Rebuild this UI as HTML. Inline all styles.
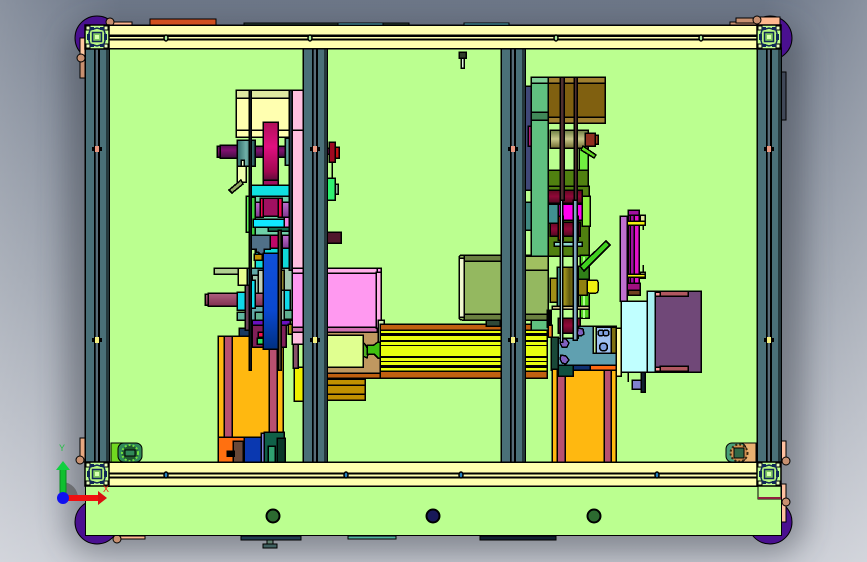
<!DOCTYPE html>
<html><head><meta charset="utf-8"><style>
html,body{margin:0;padding:0;width:867px;height:562px;overflow:hidden;background:#a0a6b0}
svg{display:block}
text{font-family:"Liberation Sans",sans-serif}
</style></head><body>
<svg width="867" height="562" viewBox="0 0 867 562" xmlns="http://www.w3.org/2000/svg">
<defs>
<linearGradient id="bg" x1="0" y1="0" x2="0" y2="1"><stop offset="0" stop-color="#6d7788"/><stop offset=".5" stop-color="#989fab"/><stop offset="1" stop-color="#c8cbd3"/></linearGradient>
<linearGradient id="bgh" x1="0" y1="0" x2="1" y2="0"><stop offset="0" stop-color="#fff" stop-opacity=".2"/><stop offset=".14" stop-color="#fff" stop-opacity="0"/><stop offset=".88" stop-color="#fff" stop-opacity="0"/><stop offset="1" stop-color="#fff" stop-opacity=".2"/></linearGradient>
<filter id="sh" x="-20%" y="-20%" width="140%" height="140%"><feGaussianBlur stdDeviation="15"/></filter>
<linearGradient id="mag" x1="0" y1="0" x2="0" y2="1"><stop offset="0" stop-color="#b01058"/><stop offset=".4" stop-color="#e01080"/><stop offset=".8" stop-color="#a00850"/><stop offset="1" stop-color="#401030"/></linearGradient>
<linearGradient id="blue" x1="0" y1="0" x2="0" y2="1"><stop offset="0" stop-color="#1050d8"/><stop offset=".6" stop-color="#0a48d0"/><stop offset="1" stop-color="#003080"/></linearGradient>
<linearGradient id="shaft" x1="0" y1="0" x2="0" y2="1"><stop offset="0" stop-color="#501050"/><stop offset=".4" stop-color="#801070"/><stop offset="1" stop-color="#401040"/></linearGradient>
<linearGradient id="shaft2" x1="0" y1="0" x2="0" y2="1"><stop offset="0" stop-color="#b06080"/><stop offset="1" stop-color="#803050"/></linearGradient>
<linearGradient id="teal" x1="0" y1="0" x2="1" y2="0"><stop offset="0" stop-color="#2f6a68"/><stop offset=".5" stop-color="#70b0a8"/><stop offset="1" stop-color="#205050"/></linearGradient>
<linearGradient id="red" x1="0" y1="0" x2="0" y2="1"><stop offset="0" stop-color="#600820"/><stop offset=".5" stop-color="#900838"/><stop offset="1" stop-color="#500820"/></linearGradient>
<linearGradient id="oli" x1="0" y1="0" x2="0" y2="1"><stop offset="0" stop-color="#6a7a40"/><stop offset=".5" stop-color="#c8c88a"/><stop offset="1" stop-color="#706a30"/></linearGradient>
<linearGradient id="pul" x1="0" y1="0" x2="1" y2="0"><stop offset="0" stop-color="#706a10"/><stop offset=".3" stop-color="#b0a020"/><stop offset=".6" stop-color="#605a10"/><stop offset="1" stop-color="#a09018"/></linearGradient>
<linearGradient id="lil" x1="0" y1="0" x2="0" y2="1"><stop offset="0" stop-color="#c070d0"/><stop offset="1" stop-color="#803890"/></linearGradient>
<g id="corner">
<rect x="0" y="0" width="24" height="24" fill="#c0ff90" stroke="#000" stroke-width="1.500"/>
<rect x="1" y="1" width="4" height="4" fill="#e8ffc0" stroke="#000"/><rect x="19" y="1" width="4" height="4" fill="#e8ffc0" stroke="#000"/>
<rect x="1" y="19" width="4" height="4" fill="#e8ffc0" stroke="#000"/><rect x="19" y="19" width="4" height="4" fill="#e8ffc0" stroke="#000"/>
<path d="M5 5 L12 3 L19 5 L21 12 L19 19 L12 21 L5 19 L3 12Z" fill="#b8f880" stroke="#102858" stroke-width="1.500"/>
<rect x="7.500" y="7.500" width="9" height="9" fill="#80c860" stroke="#102858" stroke-width="1.500"/>
<rect x="10" y="10" width="4" height="4" fill="#d8ffb0"/>
<rect x="5" y="2" width="4" height="3" fill="#102858"/><rect x="15" y="2" width="4" height="3" fill="#102858"/><rect x="5" y="19" width="4" height="3" fill="#102858"/><rect x="15" y="19" width="4" height="3" fill="#102858"/>
<rect x="2" y="9" width="3" height="6" fill="#102858"/><rect x="19" y="9" width="3" height="6" fill="#102858"/>
</g>
<g id="col">
<rect x="0" y="0" width="24" height="414" fill="#4a7078" stroke="#000" stroke-width="1.500"/>
<rect x="9" y="0" width="6" height="414" fill="#304850"/>
<rect x="9" y="0" width="1.500" height="414" fill="#000"/><rect x="11.500" y="0" width="1" height="414" fill="#8090a0"/><rect x="13" y="0" width="2" height="414" fill="#000"/>
<rect x="21.500" y="0" width="1" height="414" fill="#000"/>
<rect x="7" y="99" width="10" height="4" fill="#000"/><rect x="10" y="98" width="4" height="6" fill="#e89880"/>
<rect x="7" y="290" width="10" height="4" fill="#000"/><rect x="10" y="289" width="4" height="6" fill="#f4f080"/>
</g>
</defs>

<rect width="867" height="562" fill="url(#bg)"/>
<rect width="867" height="562" fill="url(#bgh)"/>
<rect x="66" y="24" width="738" height="530" rx="30" fill="#3a3f48" opacity=".45" filter="url(#sh)"/>

<!-- behind parts -->
<g stroke="#000" shape-rendering="crispEdges">
<rect x="150" y="19" width="66" height="7" fill="#d05020"/>
<rect x="244" y="23" width="94" height="3" fill="#304838"/>
<rect x="338" y="23" width="45" height="3" fill="#60c0d0"/>
<rect x="383" y="23" width="26" height="3" fill="#304838"/>
<rect x="464" y="23" width="45" height="3" fill="#60c0d0"/>
<rect x="241" y="536" width="60" height="4" fill="#203c50"/>
<rect x="348" y="536" width="48" height="3" fill="#50b0a0"/>
<rect x="480" y="536" width="76" height="4" fill="#102030"/>
<rect x="267" y="540" width="6" height="4" fill="#608070"/>
<rect x="263" y="544" width="14" height="4" fill="#406060"/>
<rect x="781" y="72" width="5" height="48" fill="#404858"/>
<rect x="237" y="486" width="21" height="5" fill="#a0a070"/>
<rect x="280" y="486" width="22" height="5" fill="#a0a070"/>
</g>
<!-- wheels -->
<g fill="#4a1090" stroke="#000">
<circle cx="97" cy="38" r="22"/><circle cx="770" cy="38" r="22"/>
<circle cx="97" cy="522" r="22"/><circle cx="770" cy="522" r="22"/>
</g>
<!-- tan brackets -->
<g stroke="#000" fill="#e8a880" shape-rendering="crispEdges">
<rect x="80" y="38" width="5" height="20" fill="#ffc8a0"/>
<rect x="80" y="60" width="5" height="18" fill="#c89070"/>
<rect x="80" y="438" width="5" height="24"/>
<rect x="781" y="441" width="5" height="20" fill="#ffc0a0"/><rect x="781" y="484" width="5" height="38" fill="#ffc0a0"/>
<rect x="730" y="22" width="28" height="4" fill="#c89070"/>
<rect x="736" y="18" width="22" height="5" fill="#c89070"/>
<rect x="758" y="17" width="22" height="8" fill="#ffb890"/>
<rect x="115" y="536" width="30" height="3" fill="#ffb890"/>
<rect x="110" y="22" width="22" height="3" fill="#ffb890"/>
</g>
<g fill="#c89070" stroke="#000"><circle cx="110" cy="22" r="4"/><circle cx="81" cy="58" r="4"/><circle cx="80" cy="460" r="4"/><circle cx="786" cy="461" r="4"/><circle cx="786" cy="502" r="4"/><circle cx="757" cy="20" r="4"/><circle cx="117" cy="539" r="4"/></g>

<!-- main green plate -->
<g shape-rendering="crispEdges" stroke="#000">
<rect x="85.500" y="486" width="696" height="49.500" fill="#bbff90"/>
<rect x="108" y="48" width="650" height="415" fill="#bbff90"/>
</g>

<!-- left assembly -->
<g stroke="#000" stroke-width="1.500" shape-rendering="crispEdges">
<rect x="292" y="90" width="11" height="254" fill="#ffc0e0"/>
<line x1="292" y1="130" x2="303" y2="130"/>
<!-- pink motor -->
<rect x="292" y="268" width="89" height="64" fill="#ff99f0"/>
<rect x="292" y="268" width="85" height="5" fill="#ffb0e8"/>
<rect x="292" y="327" width="85" height="5" fill="#d070b0"/>
<rect x="376" y="272" width="5" height="56" fill="#ffb0e8"/>
<!-- yellow box -->
<rect x="236" y="90" width="56" height="47" fill="#ffffb0"/>
<rect x="236" y="90" width="56" height="8" fill="#e0e8a0"/>
<line x1="236" y1="130" x2="292" y2="130"/>
<!-- shaft -->
<rect x="217" y="146" width="75" height="11" fill="url(#shaft)"/>
<rect x="220" y="145" width="18" height="13" fill="url(#shaft)"/>
<rect x="237" y="140" width="18" height="26" fill="url(#teal)"/>
<rect x="285" y="138" width="7" height="27" fill="url(#teal)"/>
<rect x="263" y="122" width="15" height="62" fill="url(#mag)"/>
<!-- right of column -->
<rect x="327" y="148" width="6" height="6" fill="#801060"/>
<rect x="329" y="142" width="6" height="20" fill="#a00820"/>
<rect x="335" y="147" width="4" height="11" fill="#c01010"/>
<line x1="332" y1="162" x2="332" y2="178"/>
<rect x="326" y="178" width="9" height="22" fill="#30f070"/>
<rect x="335" y="184" width="3" height="10" fill="#90c0a0"/>
<rect x="327" y="232" width="14" height="11" fill="#50182c"/>
<!-- hanger -->
<rect x="241" y="160" width="3" height="7" fill="#f0ffd0"/>
<rect x="237" y="166" width="9" height="16" fill="#f0ffb0"/>
<path d="M229 190 L241 180 L243 184 L232 193Z" fill="#90a860"/>
<!-- stack -->
<rect x="246" y="196" width="9" height="36" fill="#60f050"/>
<rect x="250" y="197" width="5" height="38" fill="#40d040"/>
<rect x="255" y="196" width="37" height="72" fill="#70d0a8"/>
<rect x="251" y="185" width="38" height="11" fill="#10e0e0"/>
<rect x="263" y="180" width="15" height="5" fill="#a01060"/>
<rect x="255" y="202" width="5" height="15" fill="url(#lil)"/>
<rect x="260" y="198" width="3" height="19" fill="#f00850"/>
<rect x="263" y="198" width="15" height="18" fill="#a01060"/>
<rect x="278" y="198" width="4" height="19" fill="#f00850"/>
<rect x="282" y="202" width="8" height="15" fill="url(#lil)"/>
<rect x="253" y="219" width="31" height="8" fill="#10e8ff"/>
<rect x="284" y="217" width="8" height="11" fill="#f080e0"/>
<rect x="268" y="227" width="23" height="4" fill="#107050"/>
<rect x="282" y="235" width="8" height="13" fill="url(#lil)"/>
<rect x="263" y="235" width="15" height="18" fill="#c00868"/>
<rect x="255" y="248" width="37" height="20" fill="#10d8d8"/>
<path d="M251 235 H270 V249 H264 V258 L258 252 H256 V249 H251Z" fill="#507088"/>
<rect x="254" y="254" width="8" height="6" fill="#c09000"/>
<rect x="282" y="248" width="10" height="20" fill="#10d8d8"/>
<!-- lower -->
<rect x="214" y="268" width="31" height="6" fill="#b0d090"/>
<rect x="245" y="268" width="18" height="52" fill="#60a8a8"/>
<rect x="252" y="275" width="6" height="20" fill="#a0c8b0"/>
<rect x="258" y="270" width="5" height="25" fill="#c0d0b8"/>
<rect x="278" y="268" width="14" height="52" fill="#a0c8b0"/>
<rect x="281" y="270" width="3" height="20" fill="#908830"/>
<rect x="205" y="294" width="6" height="11" fill="url(#shaft2)"/>
<rect x="208" y="293" width="55" height="13" fill="url(#shaft2)"/>
<rect x="238" y="268" width="9" height="17" fill="#e8ff90"/>
<rect x="237" y="292" width="8" height="18" fill="#10d8e8"/>
<rect x="250" y="280" width="5" height="28" fill="#10e0f0"/>
<rect x="284" y="290" width="6" height="20" fill="#10d8e8"/>
<rect x="284" y="310" width="8" height="9" fill="#60b090"/>
<rect x="255" y="312" width="8" height="8" fill="#60b090"/>
<rect x="237" y="312" width="8" height="8" fill="#60b8a0"/>
<rect x="252" y="320" width="38" height="5" fill="#6a10c0"/>
<rect x="239" y="328" width="11" height="8" fill="#183860"/>
<!-- orange box -->
<rect x="218" y="336" width="65" height="101" fill="#ffb810"/>
<rect x="224" y="336" width="8" height="101" fill="#b85070"/>
<rect x="269" y="345" width="8" height="92" fill="#b85070"/>
<rect x="218" y="437" width="27" height="25" fill="#ff7010"/>
<rect x="233" y="441" width="10" height="21" fill="#684838"/>
<rect x="227" y="451" width="7" height="5" fill="#000"/>
<rect x="244" y="437" width="18" height="25" fill="#0a38b0"/>
<rect x="261" y="433" width="4" height="29" fill="#8080d8"/>
<rect x="264" y="432" width="20" height="30" fill="#106048"/>
<rect x="268" y="446" width="7" height="16" fill="#30a070"/>
<rect x="277" y="438" width="8" height="24" fill="#083828"/>
<!-- disc & belts -->
<rect x="252" y="325" width="11" height="22" fill="#802058"/>
<rect x="258" y="332" width="5" height="5" fill="#f01050"/>
<rect x="257" y="338" width="6" height="6" fill="#30e060"/>
<rect x="278" y="325" width="8" height="22" fill="#802058"/>
<rect x="288" y="324" width="4" height="10" fill="#a09010"/>
<rect x="263" y="253" width="15" height="96" fill="url(#blue)"/>
<rect x="249" y="90" width="2" height="280" fill="#182838"/>
<rect x="278" y="230" width="3" height="140" fill="#584830"/>
<rect x="245" y="285" width="4" height="45" fill="#684058"/>
<rect x="289" y="90" width="3" height="180" fill="#283848"/>
<!-- yellow & low -->
<rect x="294" y="367" width="9" height="34" fill="#f0f000"/>
<rect x="293" y="344" width="5" height="24" fill="#885068"/>
<!-- right of left col -->
<rect x="327" y="332" width="58" height="41" fill="#c09860"/>
<rect x="327" y="335" width="36" height="32" fill="#e0ff90"/>
<path d="M363 342 Q370 349 367 358 L363 356Z" fill="#50b020"/>
<path d="M367 345 H374 L378 342 H385 V358 H378 L374 354 H367Z" fill="#40c010"/>
<rect x="378" y="320" width="6" height="22" fill="#d0f0b0"/>
<rect x="327" y="373" width="73" height="5" fill="#c06010"/>
<rect x="327" y="379" width="38" height="21" fill="#c09000"/>
<line x1="327" y1="385" x2="365" y2="385"/><line x1="327" y1="394" x2="365" y2="394"/>
<!-- long yellow slide -->
<rect x="380" y="324" width="167" height="6" fill="#c06010"/>
<rect x="380" y="330" width="167" height="41" fill="#e8ff10"/>
<rect x="380" y="371" width="167" height="7" fill="#c06010"/>
<g fill="#000" stroke="none"><rect x="381" y="333" width="166" height="3"/><rect x="381" y="340" width="166" height="2"/><rect x="381" y="345" width="166" height="1"/><rect x="381" y="356" width="166" height="2"/><rect x="381" y="361" width="166" height="1"/><rect x="381" y="365" width="166" height="3"/></g>
<!-- olive motor -->
<rect x="459" y="255" width="89" height="65" rx="3" fill="#94b860"/>
<rect x="459" y="258" width="5" height="59" fill="#f0f8d0"/>
<rect x="464" y="255" width="84" height="6" fill="#6a8040"/>
<rect x="464" y="314" width="84" height="6" fill="#6a8040"/>
<rect x="486" y="320" width="14" height="6" fill="#304838"/>
<rect x="459" y="52" width="7" height="6" fill="#303c28"/>
<rect x="461" y="58" width="3" height="10" fill="#e0f8e0"/>
</g>

<!-- right assembly -->
<g stroke="#000" stroke-width="1.500" shape-rendering="crispEdges">
<rect x="525" y="86" width="6" height="104" fill="#404878"/>
<rect x="548" y="77" width="57" height="46" fill="#806010"/>
<rect x="548" y="77" width="57" height="6" fill="#a08030"/>
<rect x="548" y="117" width="57" height="6" fill="#a08030"/>
<rect x="550" y="130" width="38" height="18" fill="url(#oli)"/>
<rect x="585" y="133" width="10" height="13" fill="#903020"/>
<rect x="595" y="135" width="3" height="9" fill="#a04020"/>
<rect x="528" y="126" width="4" height="20" fill="#b02070"/>
<rect x="579" y="148" width="9" height="24" fill="#70f040"/>
<rect x="548" y="170" width="40" height="16" fill="#508010"/>
<rect x="548" y="186" width="41" height="70" fill="#508010"/>
<rect x="582" y="196" width="8" height="30" fill="#90f040"/>
<rect x="548" y="190" width="34" height="13" fill="url(#red)"/>
<rect x="550" y="222" width="30" height="14" fill="url(#red)"/>
<rect x="548" y="204" width="10" height="19" fill="#409090"/>
<rect x="558" y="204" width="24" height="16" fill="#ff00f0"/>
<rect x="558" y="216" width="5" height="24" fill="#f04010"/>
<rect x="574" y="216" width="4" height="24" fill="#f04010"/>
<rect x="554" y="242" width="28" height="4" fill="#90d8d0"/>
<rect x="525" y="202" width="6" height="28" fill="#408880"/>
<rect x="531" y="77" width="17" height="179" fill="#60c080"/>
<rect x="531" y="77" width="17" height="6" fill="#80d098"/>
<rect x="531" y="112" width="17" height="8" fill="#408858"/>
<rect x="525" y="256" width="23" height="14" fill="#a0c060"/>
<rect x="580" y="255" width="9" height="63" fill="#50d020"/>
<rect x="583" y="257" width="2" height="61" fill="#b0ff90" stroke="none"/>
<rect x="550" y="278" width="7" height="24" fill="#a09018"/>
<rect x="557" y="267" width="21" height="41" fill="url(#pul)"/>
<rect x="557" y="267" width="4" height="41" fill="#408888"/>
<rect x="578" y="273" width="9" height="22" fill="#908010"/>
<rect x="587" y="280" width="11" height="13" rx="2" fill="#f0f010"/>
<rect x="552" y="306" width="37" height="3" fill="#d8c890"/>
<rect x="531" y="320" width="20" height="10" fill="#60c080"/>
<rect x="578" y="266" width="11" height="13" fill="#308018"/>
<path d="M580 266 L606 241 L610 245 L584 271Z" fill="#40d020"/>
<path d="M583 146 L596 155 L594 158 L581 150Z" fill="#60d820"/>
<rect x="558" y="318" width="22" height="15" fill="url(#red)"/>
<rect x="547" y="310" width="4" height="17" fill="#000"/>
<rect x="548" y="325" width="4" height="12" fill="#f08020"/>
<rect x="551" y="337" width="7" height="33" fill="#184838"/>
<rect x="560" y="77" width="4" height="123" fill="#503030"/>
<rect x="574" y="77" width="3" height="123" fill="#503030"/>
<!-- right lower -->
<rect x="552" y="369" width="64" height="93" fill="#ffb810"/>
<rect x="557" y="369" width="8" height="93" fill="#b85070"/>
<rect x="604" y="369" width="7" height="93" fill="#b85070"/>
<rect x="558" y="365" width="58" height="5" fill="#ff6a10"/>
<rect x="573" y="365" width="17" height="5" fill="#103070"/>
<rect x="558" y="365" width="15" height="11" fill="#105040"/>
<rect x="593" y="326" width="23" height="30" fill="#c0e898"/>
<path d="M558 338 H578 V326 H593 V353 H616 V365 H558Z" fill="#60a0b0"/>
<rect x="596" y="327" width="15" height="26" fill="#a0c0f0"/>
<circle cx="601" cy="333" r="3" fill="#80a0e0"/><circle cx="606" cy="333" r="3" fill="#80a0e0"/><circle cx="603.500" cy="347" r="4" fill="#80a0e0"/>
<rect x="611" y="327" width="5" height="26" fill="#807010"/>
<g fill="#8060c0"><polygon points="561,338 566,339 569,343 567,347 562,347 560,343"/><polygon points="561,355 566,356 569,360 566,364 562,363 560,359"/><polygon points="578,328 583,329 584,334 581,336 577,335"/></g>
<rect x="560" y="200" width="2.500" height="142" fill="#a0c8d0"/>
<rect x="573" y="200" width="4" height="140" fill="#80a8c0"/>
<rect x="616" y="328" width="5" height="48" fill="#ffffa0"/>
<rect x="621" y="301" width="26" height="71" fill="#c0ffff"/>
<rect x="647" y="291" width="8" height="81" fill="#a8f0f0"/>
<rect x="655" y="291" width="46" height="81" fill="#704878"/>
<rect x="660" y="291" width="28" height="5" fill="#b05860"/>
<rect x="660" y="366" width="28" height="5" fill="#b05860"/>
<rect x="655" y="292" width="5" height="4" fill="#ff9898"/><rect x="655" y="367" width="5" height="4" fill="#ff9898"/>
<rect x="620" y="216" width="7" height="85" fill="#c070d0"/>
<rect x="628" y="214" width="11" height="70" fill="#e010c8"/>
<rect x="630" y="214" width="4" height="70" fill="#a010a0"/>
<rect x="628" y="210" width="11" height="5" fill="#a010a0"/>
<rect x="627" y="283" width="13" height="7" fill="#a01080"/>
<rect x="628" y="290" width="12" height="5" fill="#704020"/>
<rect x="627" y="221" width="18" height="4" fill="#f0f010"/>
<rect x="640" y="215" width="5" height="6" fill="#e0e8a0"/>
<rect x="640" y="272" width="5" height="6" fill="#e0e8a0"/>
<rect x="627" y="274" width="18" height="3" fill="#f0f010"/>
<line x1="643" y1="230" x2="643" y2="225"/><line x1="643" y1="265" x2="643" y2="272"/>
<rect x="632" y="380" width="13" height="9" fill="#8080d0"/>
<rect x="641" y="372" width="4" height="20" fill="#102030"/>
<line x1="628" y1="372" x2="628" y2="382"/>
</g>

<!-- small bearings at bottom -->
<g stroke="#000" shape-rendering="crispEdges">
<rect x="111" y="443" width="17" height="19" fill="#70d820"/>
<rect x="738" y="443" width="18" height="19" fill="#e8b070"/>
</g>
<rect x="118" y="443" width="24" height="19" rx="6" fill="#308858" stroke="#000"/>
<circle cx="130" cy="453" r="8" fill="#205830" stroke="#70e040" stroke-width="2" stroke-dasharray="2 2"/>
<rect x="125" y="450" width="10" height="6" fill="#308858" stroke="#000"/>
<rect x="726" y="443" width="20" height="19" rx="6" fill="#48a078" stroke="#000"/>
<circle cx="739" cy="453" r="8.500" fill="#d09050" stroke="#382810" stroke-width="2" stroke-dasharray="2 2"/>
<rect x="734" y="448" width="10" height="10" fill="#306848" stroke="#000"/>

<!-- columns -->
<g shape-rendering="crispEdges">
<use href="#col" x="85" y="48"/>
<use href="#col" x="757" y="48"/>
<use href="#col" x="303" y="48"/>
<use href="#col" x="501" y="48"/>
</g>

<!-- rails -->
<g stroke="#000" shape-rendering="crispEdges">
<rect x="108" y="25" width="650" height="23.500" fill="#ffffb0" stroke-width="1.500"/>
<rect x="108" y="35" width="650" height="1.500" fill="#000"/>
<rect x="108" y="39" width="650" height="1" fill="#000"/>
<rect x="108" y="462" width="650" height="24" fill="#ffffb0" stroke-width="1.500"/>
<rect x="108" y="473" width="650" height="1" fill="#000"/>
<rect x="108" y="477" width="650" height="1" fill="#000"/>
</g>
<g stroke="#000" stroke-width="1.500">
<ellipse cx="166" cy="38" rx="2" ry="3" fill="#b0f0a0"/><ellipse cx="310" cy="38" rx="2" ry="3" fill="#b0f0a0"/><ellipse cx="556" cy="38" rx="2" ry="3" fill="#b0f0a0"/><ellipse cx="701" cy="38" rx="2" ry="3" fill="#b0f0a0"/>
<ellipse cx="166" cy="475" rx="2" ry="3" fill="#2080c0"/><ellipse cx="346" cy="475" rx="2" ry="3" fill="#2080c0"/><ellipse cx="461" cy="475" rx="2" ry="3" fill="#2080c0"/><ellipse cx="657" cy="475" rx="2" ry="3" fill="#2080c0"/>
</g>
<rect x="758" y="486" width="23" height="13" fill="#bbff90" stroke="#000"/><rect x="758" y="497" width="23" height="2" fill="#902040"/>

<use href="#corner" x="85" y="25"/>
<use href="#corner" x="757" y="25"/>
<use href="#corner" x="85" y="462"/>
<use href="#corner" x="757" y="462"/>

<!-- holes -->
<circle cx="273" cy="516" r="6.500" fill="#2c6a30" stroke="#000" stroke-width="2"/>
<circle cx="433" cy="516" r="6.500" fill="#181858" stroke="#000" stroke-width="2"/>
<circle cx="594" cy="516" r="6.500" fill="#2c6a30" stroke="#000" stroke-width="2"/>

<!-- triad -->
<path d="M63 482 A16 16 0 0 1 78 498 L63 498Z" fill="#555" opacity=".65"/>
<rect x="60" y="467" width="6" height="29" fill="#10c030" stroke="#0a8a20"/>
<polygon points="63,461 70,470 56,470" fill="#10d040"/>
<rect x="66" y="495" width="34" height="6" fill="#f01010"/>
<polygon points="107,498 98,491 98,505" fill="#d81010"/>
<circle cx="63" cy="498" r="6" fill="#1010f0"/>
<text x="59" y="451" font-size="9" fill="#20c040">Y</text>
<text x="103" y="492" font-size="9" fill="#f01010">X</text>
</svg>
</body></html>
